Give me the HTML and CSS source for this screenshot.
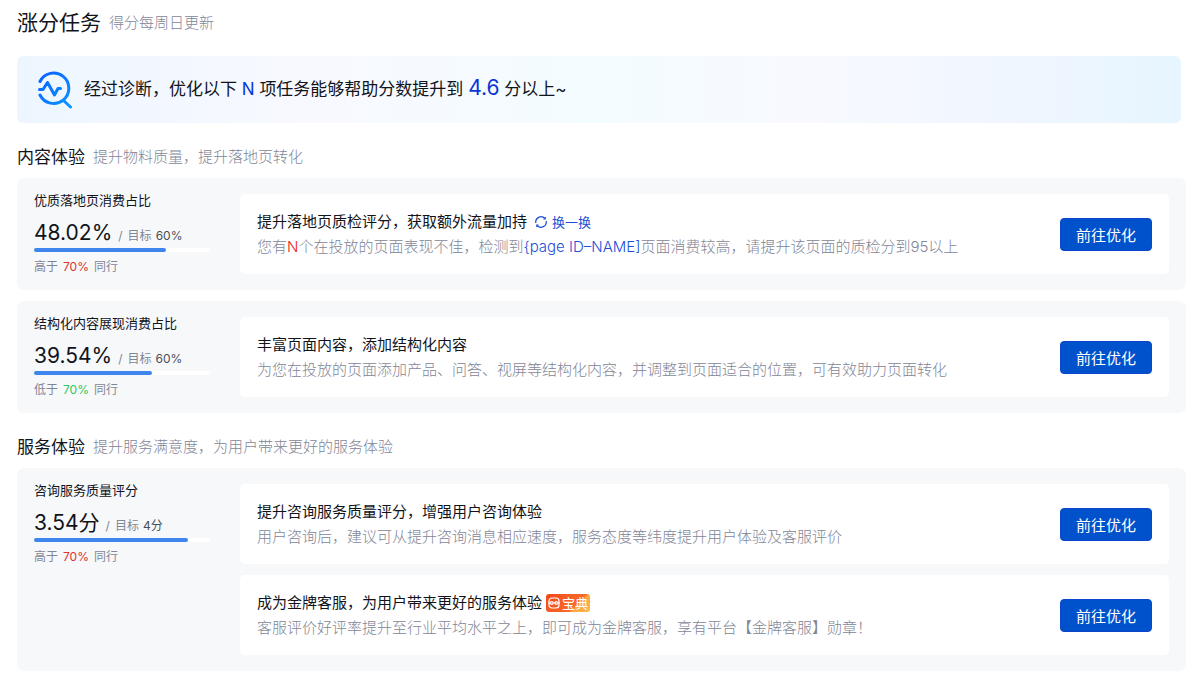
FILE: index.html
```html
<!DOCTYPE html>
<html lang="zh-CN">
<head>
  <meta charset="UTF-8">
  <meta name="viewport" content="width=device-width, initial-scale=1.0">
  <title>涨分任务</title>
  <link rel="stylesheet" href="styles.css">
</head>
<body>
  <header class="page-head">
    <h1>涨分任务</h1>
    <span class="hint">得分每周日更新</span>
  </header>

  <div class="banner">
    <svg class="banner-icon" width="36" height="38" viewBox="0 0 36 38" fill="none" stroke="url(#blue)" stroke-width="3" stroke-linecap="round" stroke-linejoin="round">
      <defs>
        <linearGradient id="blue" gradientUnits="userSpaceOnUse" x1="0" y1="0" x2="36" y2="38">
          <stop offset="0" stop-color="#0a5cff"/>
          <stop offset="1" stop-color="#0a9bff"/>
        </linearGradient>
      </defs>
      <path d="M3 10.500A15.200 15.200 0 1 1 3 24"/>
      <path d="M26.500 29.500L33.500 36"/>
      <path d="M2.500 18.500H6L10.500 11.500L17.500 24L21 17.500H23.500"/>
    </svg>
    <p>经过诊断，优化以下 <b>N</b> 项任务能够帮助分数提升到 <b class="score">4.6</b> 分以上~</p>
  </div>

  <section>
    <div class="section-head">
      <h2>内容体验</h2>
      <span class="hint">提升物料质量，提升落地页转化</span>
    </div>

    <div class="card">
      <div class="metric">
        <h3>优质落地页消费占比</h3>
        <div class="value"><strong>48.02%</strong><span class="slash">/</span><span>目标</span><em>60%</em></div>
        <div class="bar"><div class="bar-fill" style="width: 75%"></div></div>
        <div class="compare">高于<span class="up">70%</span>同行</div>
      </div>
      <div class="tasks">
        <div class="task">
          <div class="task-text">
            <h4>提升落地页质检评分，获取额外流量加持
              <button type="button" class="refresh">
                <svg width="12" height="12" viewBox="0 0 12 12" fill="none" stroke="currentColor" stroke-width="1.200">
                  <path d="M.8 7A5.300 5.300 0 0 1 9.900 2.500M11.200 5A5.300 5.300 0 0 1 2.100 9.500"/>
                  <path d="M10.200 1V3H8.500M1.800 11V9H3.500"/>
                </svg>换一换</button>
            </h4>
            <p>您有<span class="warn">N</span>个在投放的页面表现不佳，检测到<a href="#">{page ID–NAME]</a>页面消费较高，请提升该页面的质检分到95以上</p>
          </div>
          <button type="button" class="btn">前往优化</button>
        </div>
      </div>
    </div>

    <div class="card">
      <div class="metric">
        <h3>结构化内容展现消费占比</h3>
        <div class="value"><strong>39.54%</strong><span class="slash">/</span><span>目标</span><em>60%</em></div>
        <div class="bar"><div class="bar-fill" style="width: 67%"></div></div>
        <div class="compare">低于<span class="down">70%</span>同行</div>
      </div>
      <div class="tasks">
        <div class="task">
          <div class="task-text">
            <h4>丰富页面内容，添加结构化内容</h4>
            <p>为您在投放的页面添加产品、问答、视屏等结构化内容，并调整到页面适合的位置，可有效助力页面转化</p>
          </div>
          <button type="button" class="btn">前往优化</button>
        </div>
      </div>
    </div>
  </section>

  <section>
    <div class="section-head">
      <h2>服务体验</h2>
      <span class="hint">提升服务满意度，为用户带来更好的服务体验</span>
    </div>

    <div class="card">
      <div class="metric">
        <h3>咨询服务质量评分</h3>
        <div class="value"><strong>3.54分</strong><span class="slash">/</span><span>目标</span><em>4分</em></div>
        <div class="bar"><div class="bar-fill" style="width: 87.5%"></div></div>
        <div class="compare">高于<span class="up">70%</span>同行</div>
      </div>
      <div class="tasks">
        <div class="task">
          <div class="task-text">
            <h4>提升咨询服务质量评分，增强用户咨询体验</h4>
            <p>用户咨询后，建议可从提升咨询消息相应速度，服务态度等纬度提升用户体验及客服评价</p>
          </div>
          <button type="button" class="btn">前往优化</button>
        </div>
        <div class="task">
          <div class="task-text">
            <h4>成为金牌客服，为用户带来更好的服务体验
              <span class="tag">
                <svg width="12" height="12" viewBox="0 0 12 12" fill="none" stroke="#fff" stroke-width="1.200">
                  <rect x="1" y="1" width="10" height="10" rx="3"/>
                  <path d="M0 6H2.500M9.500 6H12M5 6H7"/>
                  <circle cx="3.800" cy="6" r="1.300"/>
                  <circle cx="8.200" cy="6" r="1.300"/>
                </svg>宝典</span>
            </h4>
            <p>客服评价好评率提升至行业平均水平之上，即可成为金牌客服，享有平台【金牌客服】勋章！</p>
          </div>
          <button type="button" class="btn">前往优化</button>
        </div>
      </div>
    </div>
  </section>
</body>
</html>
```
FILE: styles.css
```css
* {
  box-sizing: border-box;
}
body {
  margin: 0;
  padding: 8px 14px 18px 17px;
  font-family: Inter, "Noto Sans CJK SC", sans-serif;
  font-size: 15px;
  color: #11141a;
  background: #fff;
}
h1, h2, h3, h4, p {
  margin: 0;
  font-weight: 400;
}
button {
  font-family: inherit;
  cursor: pointer;
}
.page-head {
  display: flex;
  align-items: center;
  gap: 8px;
  margin-bottom: 18px;
  line-height: 30px;
}
h1 {
  font-size: 21px;
}
.hint {
  color: #7f8697;
  font-weight: 300;
}
.banner {
  display: flex;
  align-items: center;
  gap: 11px;
  margin-right: 5px;
  padding: 14px 20px;
  border-radius: 6px;
  background: linear-gradient(90deg, #edf6ff 0%, #f8f9ff 25%, #f3fcff 50%, #f8f9ff 68%, #eff6ff 87%, #e6f5ff 100%);
  font-size: 17px;
  line-height: 39px;
}
.banner b {
  color: #0a35d6;
  font-weight: 400;
}
.banner .score {
  font-size: 21px;
  line-height: 21px;
}
.section-head {
  display: flex;
  align-items: center;
  gap: 8px;
  margin: 22px 0 9px;
  line-height: 24px;
}
h2 {
  font-size: 17px;
}
.card {
  display: flex;
  gap: 30px;
  padding: 16px 17px;
  border-radius: 7px;
  background: #f7f8fa;
}
.card + .card {
  margin-top: 11px;
}
.metric {
  flex: 0 0 176px;
  margin: -2px 0;
  font-size: 12px;
  line-height: 17px;
  color: #7f8697;
}
h3 {
  font-size: 13px;
  color: #11141a;
}
.value {
  display: flex;
  align-items: baseline;
  height: 30px;
  margin-top: 9px;
  line-height: 30px;
}
.value strong {
  font-size: 21px;
  font-weight: 400;
  color: #11141a;
}
.value .slash {
  margin: 0 5px 0 6px;
}
.value em {
  margin-left: 4px;
  font-style: normal;
  color: #4a4e57;
}
.bar {
  height: 4px;
  border-radius: 2px;
  background: #fff;
}
.bar-fill {
  height: 4px;
  border-radius: 2px;
  background: #3e86ee;
}
.compare {
  display: flex;
  gap: 5px;
  margin-top: 6px;
}
.up {
  color: #e03131;
}
.down {
  color: #2cc866;
}
.tasks {
  flex: 1;
  display: flex;
  flex-direction: column;
  gap: 11px;
}
.task {
  display: flex;
  align-items: center;
  justify-content: space-between;
  gap: 20px;
  padding: 15px 17px;
  border-radius: 5px;
  background: #fff;
}
.task-text {
  line-height: 25px;
}
h4 {
  display: flex;
  align-items: center;
  font-size: 15px;
}
.task-text p {
  color: #7f8697;
  font-weight: 300;
}
.task-text a {
  color: #1c4fd6;
  text-decoration: none;
}
.warn {
  color: #f01414;
}
.refresh {
  display: flex;
  align-items: center;
  gap: 5px;
  margin-left: 8px;
  padding: 0;
  border: none;
  background: none;
  font-size: 13px;
  color: #1c4fd6;
}
.tag {
  display: flex;
  align-items: center;
  gap: 2px;
  margin-left: 4px;
  padding: 0 2px;
  border-radius: 3px;
  background: linear-gradient(135deg, #f04a1c 0%, #fa6a28 65%, #ffa53c 70%, #ffb84e 100%);
  font-size: 13px;
  line-height: 18px;
  color: #fff;
}
.btn {
  flex: none;
  height: 33px;
  padding: 0 15px;
  border: 1px solid #0a45cc;
  border-radius: 4px;
  background: #0052cc;
  font-size: 15px;
  color: #fff;
}
.btn:hover {
  background: #1a66db;
}
```
